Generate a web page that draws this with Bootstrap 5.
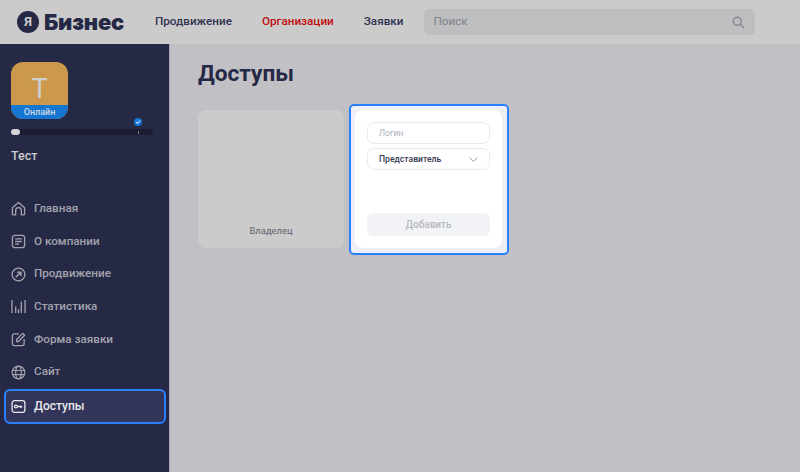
<!DOCTYPE html>
<html lang="ru">
<head>
    <meta charset="UTF-8">
    <meta name="viewport" content="width=device-width, initial-scale=1">
    <title>Доступы</title>
    <link href="https://cdn.jsdelivr.net/npm/bootstrap@5.3.0/dist/css/bootstrap.min.css" rel="stylesheet">
    <style>
        html, body { height: 100%; }
        body { font-family: Roboto, "Noto Sans", sans-serif; background: #c1c0c5; color: #262946; overflow: hidden; }
        .top-bar { height: 44px; background: #cbcbcb; padding-left: 17px; }
        .logo-mark { width: 22px; height: 22px; border-radius: 50%; background: #262946; color: #cbcbcb; font-size: 13px; font-weight: 700; }
        .logo-word { font-family: Inter, sans-serif; font-size: 22px; font-weight: 900; margin-left: 5px; margin-right: 30px; width: 81px; white-space: nowrap; letter-spacing: -.2px; }
        .top-link { font-size: 11.7px; font-weight: 500; color: #2f3250; text-decoration: none; margin-right: 30px; }
        .top-link.is-current { color: #bf0d0d; }
        .search-box { width: 331px; height: 26px; background: #bdbec0; border-radius: 5px; padding: 0 10px 0 9px; font-size: 11.7px; color: #7f8087; margin-left: -9px; }
        .page-body { height: 428px; }
        .side-bar { width: 170px; background: #262946; border-right: 1px solid #a9a9b2; padding: 18px 3px 0 4px; }
        .avatar-box { width: 57px; height: 57px; border-radius: 12px; background: #cc994c; margin-left: 7px; overflow: hidden; color: #cfcfd3; }
        .avatar-letter { font-size: 27px; line-height: 1; font-weight: 400; padding-top: 12px; }
        .avatar-status { height: 14px; background: #1577d2; font-size: 9px; font-weight: 500; color: #cfd6e4; line-height: 14px; }
        .progress-wrap { margin: 10px 0 0 7px; width: 142px; height: 6px; background: #1c1d33; border-radius: 3px; }
        .progress-knob { left: 0; top: 0; width: 9px; height: 6px; border-radius: 3px; background: #d5d5d5; }
        .progress-check { left: 123px; top: -11px; width: 8px; height: 8px; border-radius: 50%; background: #1577d2; }
        .progress-tick { left: 127px; top: 2px; width: 1px; height: 3px; background: #777; }
        .company-name { margin: 13px 0 0 7px; font-size: 12.5px; font-weight: 500; color: #c9c9cc; line-height: 16px; }
        .side-menu { margin-top: 28.4px; }
        .side-item { height: 32.7px; padding-left: 7px; gap: 8px; font-size: 11.7px; font-weight: 500; color: #a3a3ae; }
        .side-item svg { width: 15px; height: 15px; flex: none; }
        .side-item.is-active { height: 35px; border: 2px solid #2a7fff; border-radius: 6px; background: #33365a; color: #e8e8ec; padding-left: 5px; font-size: 12px; }
        .main-area { padding: 15px 0 0 28px; }
        .page-title { font-size: 22.6px; font-weight: 700; line-height: 30px; margin: 0 0 21px; color: #262946; }
        .owner-card { width: 146px; height: 138px; background: #cbcbcb; border-radius: 8px; font-size: 9.4px; color: #62636f; padding-bottom: 10px; }
        .add-frame { width: 160px; height: 151px; margin: -6px 0 0 5px; border: 2px solid #2a7fff; border-radius: 5px; background: #eef0f5; padding: 4px 5px 4px 4px; }
        .add-card { height: 138px; background: #fff; border-radius: 8px; padding: 12px; }
        .field-box { height: 22px; border: 1px solid #eaebef; border-radius: 7px; padding: 0 11px; font-size: 8.6px; }
        .field-hint { color: #aeb0bb; }
        .field-value { color: #363952; font-weight: 500; margin-top: 4px; }
        .add-btn { height: 23px; background: #f2f3f6; border: 0; border-radius: 6px; color: #b6b8c2; font-size: 10px; font-weight: 500; margin-top: auto; }
    </style>
</head>
<body>
<!-- Верхняя панель -->
<header class="top-bar d-flex align-items-center">
    <span class="logo-mark d-flex align-items-center justify-content-center">Я</span>
    <span class="logo-word">Бизнес</span>
    <a class="top-link" href="#">Продвижение</a>
    <a class="top-link is-current" href="#">Организации</a>
    <a class="top-link" href="#">Заявки</a>
    <div class="search-box d-flex align-items-center justify-content-between">
        <span>Поиск</span>
        <svg width="13" height="13" viewBox="0 0 13 13" fill="none" stroke="#84858c" stroke-width="1.4"><circle cx="5.3" cy="5.3" r="4"/><path d="M8.3 8.3 12 12"/></svg>
    </div>
</header>

<div class="page-body d-flex">
    <!-- Боковое меню -->
    <aside class="side-bar flex-shrink-0">
        <div class="avatar-box d-flex flex-column text-center">
            <div class="avatar-letter flex-grow-1 d-flex align-items-center justify-content-center">Т</div>
            <div class="avatar-status">Онлайн</div>
        </div>
        <div class="progress-wrap position-relative">
            <span class="progress-knob position-absolute"></span>
            <span class="progress-tick position-absolute"></span>
            <span class="progress-check position-absolute d-flex align-items-center justify-content-center">
                <svg width="6" height="6" viewBox="0 0 6 6" fill="none" stroke="#fff" stroke-width="1"><path d="M1 3.2 2.5 4.5 5 1.5"/></svg>
            </span>
        </div>
        <div class="company-name">Тест</div>
        <nav class="side-menu">
            <div class="side-item d-flex align-items-center">
                <svg viewBox="0 0 16 16" fill="none" stroke="currentColor" stroke-width="1.4" stroke-linejoin="round"><path d="M1.5 7.2 8 1.5l6.5 5.7v6.3a1.3 1.3 0 0 1-1.3 1.3H11V10a3 3 0 0 0-6 0v4.8H2.8a1.3 1.3 0 0 1-1.3-1.3z"/></svg>
                Главная
            </div>
            <div class="side-item d-flex align-items-center">
                <svg viewBox="0 0 16 16" fill="none" stroke="currentColor" stroke-width="1.4"><rect x="1.5" y="1.5" width="13" height="13" rx="2.5"/><path d="M4.5 5.2h7M4.5 8h7M4.5 10.8h4"/></svg>
                О компании
            </div>
            <div class="side-item d-flex align-items-center">
                <svg viewBox="0 0 16 16" fill="none" stroke="currentColor" stroke-width="1.4"><circle cx="8" cy="8" r="6.8"/><path d="M5 11l5.2-5.2M6.5 5.5h4v4" stroke-width="1.6"/></svg>
                Продвижение
            </div>
            <div class="side-item d-flex align-items-center">
                <svg viewBox="0 0 16 16" fill="none" stroke="currentColor" stroke-width="1.4"><path d="M1 1v14M15 1v14M5 8v7M8 11v4M11 3v12"/></svg>
                Статистика
            </div>
            <div class="side-item d-flex align-items-center">
                <svg viewBox="0 0 16 16" fill="none" stroke="currentColor" stroke-width="1.4" stroke-linejoin="round"><path d="M8.5 2H3.5a2 2 0 0 0-2 2v8.5a2 2 0 0 0 2 2H12a2 2 0 0 0 2-2V7.5"/><path d="M6 10.2V8l6.5-6.5 2 2L8 10.2z"/></svg>
                Форма заявки
            </div>
            <div class="side-item d-flex align-items-center">
                <svg viewBox="0 0 16 16" fill="none" stroke="currentColor" stroke-width="1.2"><circle cx="8" cy="8" r="6.8"/><ellipse cx="8" cy="8" rx="3" ry="6.8"/><path d="M1.5 5.8h13M1.5 10.2h13"/></svg>
                Сайт
            </div>
            <div class="side-item is-active d-flex align-items-center">
                <svg viewBox="0 0 16 16" fill="none" stroke="currentColor" stroke-width="1.4"><rect x="1.2" y="1.8" width="13.6" height="12.4" rx="2.5"/><circle cx="5.2" cy="8" r="1.5"/><path d="M6.7 8h5.3M10.5 8v1.6"/></svg>
                Доступы
            </div>
        </nav>
    </aside>

    <!-- Контент -->
    <main class="main-area flex-grow-1">
        <h1 class="page-title">Доступы</h1>
        <div class="d-flex align-items-start">
            <div class="owner-card d-flex align-items-end justify-content-center">Владелец</div>
            <div class="add-frame">
                <form class="add-card d-flex flex-column">
                    <div class="field-box field-hint d-flex align-items-center">Логин</div>
                    <div class="field-box field-value d-flex align-items-center justify-content-between">
                        <span>Представитель</span>
                        <svg width="9" height="5" viewBox="0 0 9 5" fill="none" stroke="#9a9ca8" stroke-width="1"><path d="M.5.5l4 4 4-4"/></svg>
                    </div>
                    <button type="button" class="add-btn w-100">Добавить</button>
                </form>
            </div>
        </div>
    </main>
</div>
<script src="https://cdn.jsdelivr.net/npm/bootstrap@5.3.0/dist/js/bootstrap.bundle.min.js"></script>
</body>
</html>
